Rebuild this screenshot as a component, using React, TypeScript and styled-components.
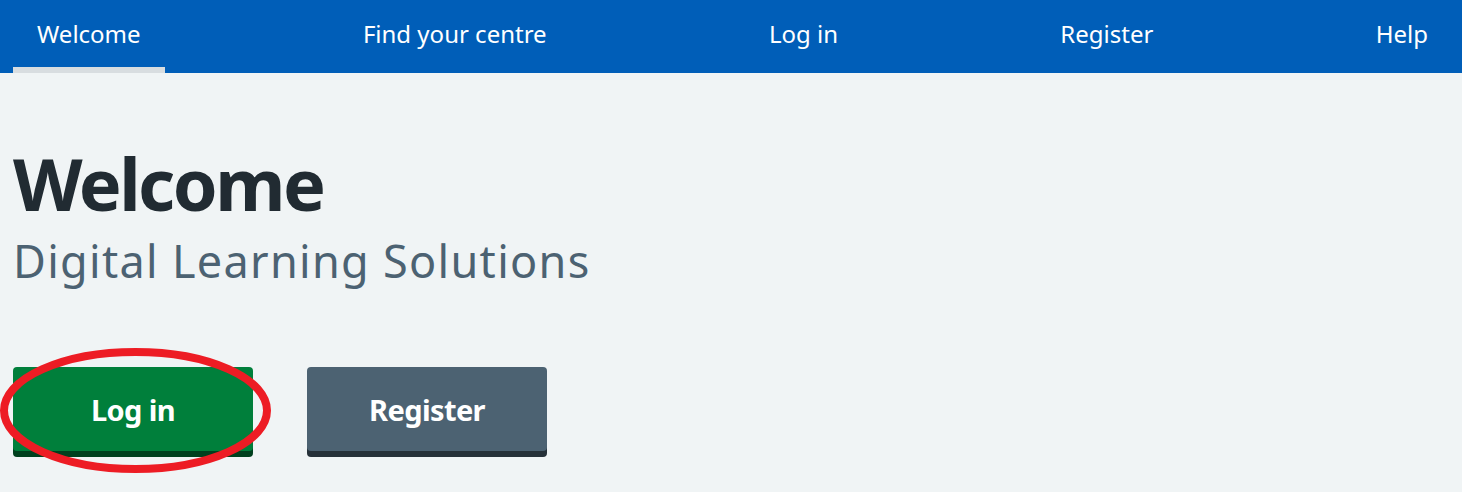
import React from "react";
import styled, { createGlobalStyle } from "styled-components";

const Global = createGlobalStyle`
  html, body { margin: 0; padding: 0; background: #f0f4f5; }
  body { font-family: "Noto Sans", "Open Sans", Arial, sans-serif; min-height: 492px; }
  * { box-sizing: border-box; }
`;

const NavBar = styled.nav`
  background: #005eb8;
  height: 73px;
`;

const NavList = styled.ul`
  list-style: none;
  margin: 0;
  padding: 0 10px 0 13px;
  height: 100%;
  display: flex;
  justify-content: space-between;
`;

const NavItem = styled.li<{ $active?: boolean }>`
  height: 73px;
  padding: 0 24px;
  display: flex;
  align-items: center;
  color: #ffffff;
  font-size: 24px;
  border-bottom: 6px solid ${(p) => (p.$active ? "#d8dde0" : "transparent")};
`;

const Main = styled.main`
  padding: 70px 13px 40px;
`;

const Title = styled.h1`
  margin: 0;
  font-size: 72px;
  line-height: 80px;
  font-weight: 700;
  letter-spacing: -2.5px;
  color: #212b32;
`;

const Subtitle = styled.p`
  margin: 10px 0 0;
  font-size: 45px;
  line-height: 56px;
  letter-spacing: 1.3px;
  color: #4c6272;
`;

const Actions = styled.div`
  margin-top: 78px;
  display: flex;
  gap: 54px;
`;

const Button = styled.button<{ $tone: "green" | "grey" }>`
  width: 240px;
  height: 84px;
  border: 0;
  border-radius: 4px;
  font-family: inherit;
  font-size: 29px;
  font-weight: 700;
  letter-spacing: -0.6px;
  color: #ffffff;
  display: flex;
  align-items: center;
  justify-content: center;
  background: ${(p) => (p.$tone === "green" ? "#007f3b" : "#4c6272")};
  box-shadow: 0 6px 0 ${(p) => (p.$tone === "green" ? "#00401e" : "#263139")};
  cursor: pointer;
`;

const Annotated = styled.div`
  position: relative;
`;

const Ellipse = styled.svg`
  position: absolute;
  left: -13px;
  top: -19px;
  pointer-events: none;
  overflow: visible;
`;

export default function App() {
  return (
    <>
      <Global />
      <NavBar>
        <NavList>
          <NavItem $active>Welcome</NavItem>
          <NavItem>Find your centre</NavItem>
          <NavItem>Log in</NavItem>
          <NavItem>Register</NavItem>
          <NavItem>Help</NavItem>
        </NavList>
      </NavBar>
      <Main>
        <Title>Welcome</Title>
        <Subtitle>Digital Learning Solutions</Subtitle>
        <Actions>
          <Annotated>
            <Button $tone="green">Log in</Button>
            <Ellipse width="271" height="125" viewBox="0 0 271 125">
              <ellipse cx="135.5" cy="62.5" rx="131.5" ry="58.5" fill="none" stroke="#ed1c24" strokeWidth="8" />
            </Ellipse>
          </Annotated>
          <Button $tone="grey">Register</Button>
        </Actions>
      </Main>
    </>
  );
}
